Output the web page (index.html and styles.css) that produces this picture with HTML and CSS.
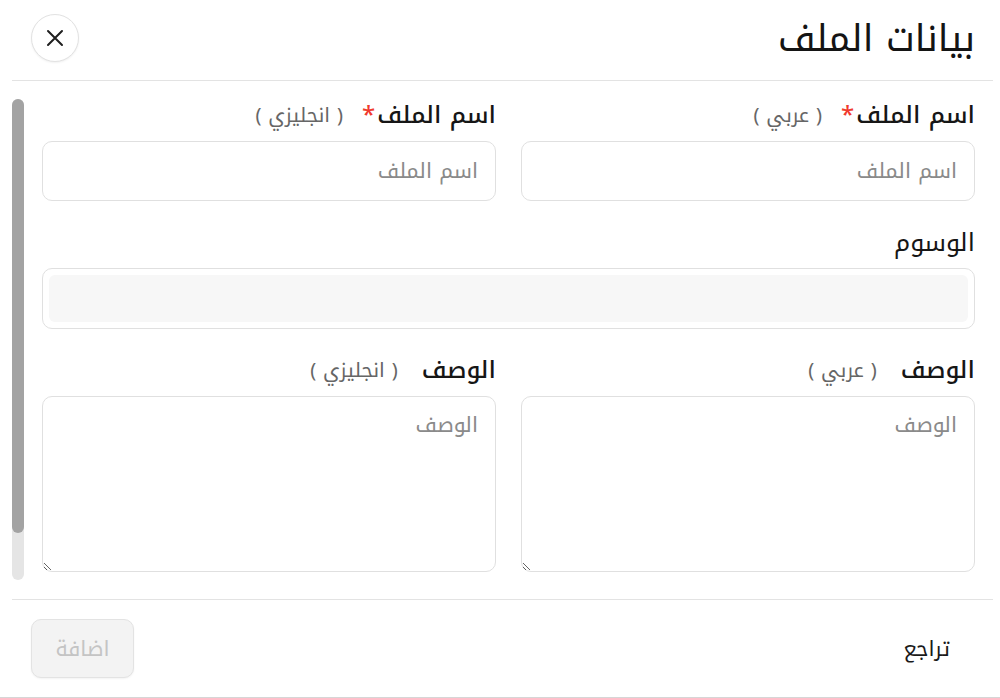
FILE: index.html
```html
<!DOCTYPE html>
<html lang="ar" dir="rtl">
<head>
<meta charset="utf-8">
<title>بيانات الملف</title>
<link rel="stylesheet" href="styles.css">
</head>
<body>
<div class="modal">
  <header class="head">
    <h1 class="title">بيانات الملف</h1>
    <button class="close" type="button" aria-label="إغلاق">
      <svg width="22" height="22" viewBox="0 0 22 22"><path d="M4 4 L18 18 M18 4 L4 18" stroke="#1f1f1f" stroke-width="2" stroke-linecap="round" fill="none"/></svg>
    </button>
  </header>
  <div class="body">
    <div class="scroll">
      <div class="form">
        <div class="field">
          <label class="label"><span class="name">اسم الملف</span><span class="req">*</span><span class="lang">( عربي )</span></label>
          <input class="input" type="text" placeholder="اسم الملف">
        </div>
        <div class="field">
          <label class="label"><span class="name">اسم الملف</span><span class="req">*</span><span class="lang">( انجليزي )</span></label>
          <input class="input" type="text" placeholder="اسم الملف">
        </div>
        <div class="field wide">
          <label class="label"><span class="name light">الوسوم</span></label>
          <div class="tags"><div class="tags-inner"></div></div>
        </div>
        <div class="field">
          <label class="label"><span class="name">الوصف</span><span class="lang spaced">( عربي )</span></label>
          <textarea class="area" placeholder="الوصف"></textarea>
        </div>
        <div class="field">
          <label class="label"><span class="name">الوصف</span><span class="lang spaced">( انجليزي )</span></label>
          <textarea class="area" placeholder="الوصف"></textarea>
        </div>
      </div>
    </div>
    <div class="scrollbar" aria-hidden="true"><div class="thumb"></div></div>
  </div>
  <footer class="foot">
    <button class="back" type="button">تراجع</button>
    <button class="add" type="button" disabled>اضافة</button>
  </footer>
</div>
</body>
</html>
```
FILE: styles.css
```css
* { box-sizing: border-box; }
html, body { margin: 0; padding: 0; background: #fff; }
body { font-family: "Noto Kufi Arabic", "DejaVu Sans", sans-serif; color: #1a1a1a; }

.modal {
  width: 1000px;
  height: 698px;
  display: flex;
  flex-direction: column;
  padding: 0 7px 0 12px;
  border-bottom: 1px solid #d6d6d6;
}

.head {
  height: 81px;
  flex: none;
  display: flex;
  align-items: center;
  justify-content: space-between;
  padding: 0 18px 4px 19px;
  border-bottom: 1px solid #e3e3e3;
}
.title {
  margin: 0;
  font-family: "Noto Kufi Arabic", sans-serif;
  font-weight: 400;
  font-size: 37px;
  color: #141414;
  line-height: 1;
  padding-top: 2px;
}
.close {
  width: 48px;
  height: 48px;
  border-radius: 50%;
  border: 1px solid #e2e2e2;
  background: #fff;
  display: flex;
  align-items: center;
  justify-content: center;
  padding: 0;
  box-shadow: 0 1px 2px rgba(0,0,0,0.06);
}

.body {
  flex: 1;
  min-height: 0;
  display: flex;
  gap: 18px;
}
.scroll {
  flex: 1;
  overflow: hidden;
  padding: 19px 18px 0 0;
}
.scrollbar {
  flex: none;
  width: 12px;
  margin: 18px 0 19px;
  background: #e5e5e5;
  border-radius: 6px;
  display: flex;
  flex-direction: column;
}
.thumb {
  height: 434px;
  background: #a3a3a3;
  border-radius: 6px;
}

.form {
  display: grid;
  grid-template-columns: 1fr 1fr;
  column-gap: 25px;
  row-gap: 26px;
}
.field { display: flex; flex-direction: column; }
.field.wide { grid-column: 1 / -1; }

.label {
  height: 30px;
  margin-bottom: 11px;
  display: flex;
  align-items: center;
  white-space: nowrap;
}
.name { font-size: 24px; font-weight: 500; color: #161616; }
.name.light { font-size: 25px; font-weight: 400; }
.req { color: #f03a2e; font-size: 24px; font-weight: 500; margin-left: 19px; margin-right: 2px; }
.lang { font-size: 20px; color: #666; }
.lang.spaced { margin-right: 24px; }

.input {
  height: 60px;
  width: 100%;
  border: 1px solid #e0e0e0;
  border-radius: 10px;
  padding: 0 17px;
  font-family: inherit;
  font-size: 21px;
  color: #333;
  background: #fff;
  outline: none;
}
.input::placeholder, .area::placeholder { color: #8a8a8a; }

.tags {
  height: 61px;
  border: 1px solid #e0e0e0;
  border-radius: 10px;
  padding: 6px;
}
.tags-inner {
  height: 100%;
  background: #f7f7f7;
  border-radius: 6px;
}

.area {
  height: 176px;
  width: 100%;
  border: 1px solid #e0e0e0;
  border-radius: 10px;
  padding: 8px 17px;
  font-family: inherit;
  font-size: 21px;
  color: #333;
  background: #fff;
  outline: none;
  resize: vertical;
}

.foot {
  height: 98px;
  flex: none;
  border-top: 1px solid #e3e3e3;
  display: flex;
  align-items: center;
  justify-content: space-between;
  padding: 0 24px 0 19px;
}
.back {
  font-family: inherit;
  font-size: 21px;
  color: #1a1a1a;
  background: none;
  border: none;
  padding: 8px 19px;
}
.add {
  width: 103px;
  height: 59px;
  border-radius: 10px;
  border: 1px solid #e3e3e3;
  background: #f3f3f3;
  color: #c4c4c4;
  font-family: inherit;
  font-size: 21px;
  box-shadow: 0 1px 2px rgba(0,0,0,0.05);
}
```
